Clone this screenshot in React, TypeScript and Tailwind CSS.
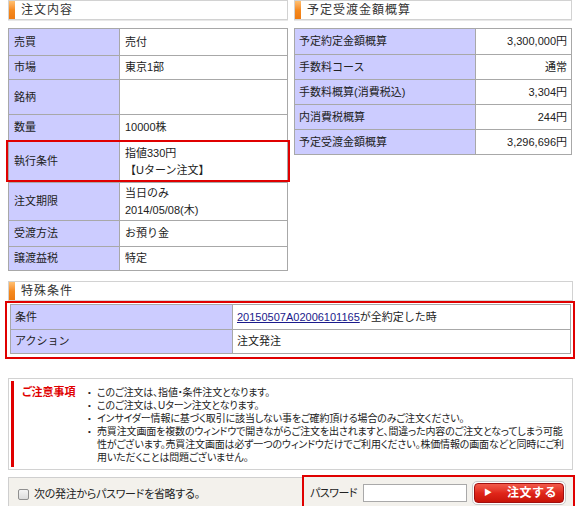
import React from "react";

const FONT = "font-['Liberation_Sans','Noto_Sans_CJK_JP',sans-serif]";

type Row = { label: string; value: React.ReactNode; h: string; mark?: boolean };

const leftRows: Row[] = [
  { label: "売買", value: "売付", h: "h-[26px]" },
  { label: "市場", value: "東京1部", h: "h-[24px]" },
  { label: "銘柄", value: "", h: "h-[35px]" },
  { label: "数量", value: "10000株", h: "h-[26px]" },
  {
    label: "執行条件",
    value: (
      <>
        <div>指値330円</div>
        <div>【Uターン注文】</div>
      </>
    ),
    h: "h-[42px]",
    mark: true,
  },
  {
    label: "注文期限",
    value: (
      <>
        <div>当日のみ</div>
        <div>2014/05/08(木)</div>
      </>
    ),
    h: "h-[38px]",
  },
  { label: "受渡方法", value: "お預り金", h: "h-[26px]" },
  { label: "譲渡益税", value: "特定", h: "h-[24px]" },
];

const rightRows = [
  { label: "予定約定金額概算", value: "3,300,000円" },
  { label: "手数料コース", value: "通常" },
  { label: "手数料概算(消費税込)", value: "3,304円" },
  { label: "内消費税概算", value: "244円" },
  { label: "予定受渡金額概算", value: "3,296,696円" },
];

const notes = [
  "このご注文は、指値・条件注文となります。",
  "このご注文は、Uターン注文となります。",
  "インサイダー情報に基づく取引に該当しない事をご確約頂ける場合のみご注文ください。",
  "売買注文画面を複数のウィンドウで開きながらご注文を出されますと、間違った内容のご注文となってしまう可能性がございます。売買注文画面は必ず一つのウィンドウだけでご利用ください。株価情報の画面などと同時にご利用いただくことは問題ございません。",
];

function SectionHead({ title }: { title: string }) {
  return (
    <div className="flex h-[20px] border border-[#d2d2d2] bg-white shadow-[0_1px_0_#e8e8e8]">
      <div className="w-[6px] bg-linear-to-b from-[#ffc070] via-[#f58a1e] to-[#ee7a10]" />
      <div className="flex items-center pl-[6px] text-[12px] tracking-[1px] text-[#333]">{title}</div>
    </div>
  );
}

export default function App() {
  return (
    <div className={`w-[580px] h-[506px] overflow-hidden bg-white text-[11px] text-[#222] ${FONT}`}>
      <div className="flex pl-[8px] gap-[6px]">
        {/* 注文内容 */}
        <div className="w-[280px]">
          <SectionHead title="注文内容" />
          <div className="mt-[8px] border border-[#a8a8a8] bg-white">
            {leftRows.map((r, i) => (
              <div
                key={r.label}
                className={`relative flex ${r.h} ${i > 0 ? "border-t border-[#a8a8a8]" : ""}`}
              >
                <div className="flex w-[111px] items-center border-r border-[#a8a8a8] bg-[#ccccff] pl-[5px]">
                  {r.label}
                </div>
                <div className="flex flex-1 flex-col justify-center pl-[5px] leading-[17px]">{r.value}</div>
                {r.mark && (
                  <div className="absolute -left-[3px] -right-[3px] -top-[1px] bottom-0 border-2 border-[#e00000]" />
                )}
              </div>
            ))}
          </div>
        </div>

        {/* 予定受渡金額概算 */}
        <div className="w-[278px]">
          <SectionHead title="予定受渡金額概算" />
          <div className="mt-[8px] border border-[#a8a8a8] bg-white">
            {rightRows.map((r, i) => (
              <div key={r.label} className={`flex h-[25px] ${i > 0 ? "border-t border-[#a8a8a8]" : ""}`}>
                <div className="flex w-[181px] items-center border-r border-[#a8a8a8] bg-[#ccccff] pl-[4px]">
                  {r.label}
                </div>
                <div className="flex flex-1 items-center justify-end pr-[4px]">{r.value}</div>
              </div>
            ))}
          </div>
        </div>
      </div>

      {/* 特殊条件 */}
      <div className="mt-[10px] ml-[8px] w-[565px]">
        <SectionHead title="特殊条件" />
      </div>
      <div className="ml-[5px] w-[570px] border-2 border-[#e00000] pt-[1px] pb-[3px] pl-[3px] pr-[2px]">
        <div className="border border-[#a8a8a8] bg-white">
          <div className="flex h-[24px]">
            <div className="flex w-[222px] items-center border-r border-[#a8a8a8] bg-[#ccccff] pl-[4px]">条件</div>
            <div className="flex flex-1 items-center pl-[4px]">
              <a href="#" className="text-[#1a1a8c] underline">20150507A02006101165</a>
              <span>が全約定した時</span>
            </div>
          </div>
          <div className="flex h-[24px] border-t border-[#a8a8a8]">
            <div className="flex w-[222px] items-center border-r border-[#a8a8a8] bg-[#ccccff] pl-[4px]">アクション</div>
            <div className="flex flex-1 items-center pl-[4px]">注文発注</div>
          </div>
        </div>
      </div>

      {/* ご注意事項 */}
      <div className="mt-[19px] ml-[8px] w-[565px] border border-[#d2d2d2] bg-white py-[2px] pl-[2px]">
        <div className="flex border-l-[3px] border-[#e00000] pt-[5px] pb-[3px]">
          <div className="w-[74px] shrink-0 pl-[8px] text-[11px] leading-[13px] font-bold whitespace-nowrap text-[#e00000] [font-feature-settings:'palt']">
            ご注意事項
          </div>
          <ul className="w-[484px] text-[10px] leading-[13px] tracking-[-0.15px] [font-feature-settings:'palt']">
            {notes.map((t) => (
              <li key={t} className="flex">
                <span className="w-[9px] shrink-0 text-[8px]">•</span>
                <span>{t}</span>
              </li>
            ))}
          </ul>
        </div>
      </div>

      {/* 発注 */}
      <div className="mt-[5px] ml-[8px] flex h-[36px] w-[567px] items-stretch">
        <div className="mt-[2px] flex flex-1 items-center gap-[5px] border-t border-l border-[#cfcfcf] bg-[#f3f1ec] pl-[9px] [font-feature-settings:'palt']">
          <span className="inline-block h-[11px] w-[11px] rounded-[2px] border border-[#8f8f8f] bg-linear-to-b from-[#f4f4f4] to-[#dcdcdc]" />
          <span className="text-[11px] tracking-[-0.3px]">次の発注からパスワードを省略する。</span>
        </div>
        <div className="flex w-[273px] items-center border-2 border-[#e00000] bg-[#f3f1ec] pl-[6px]">
          <span className="tracking-[-0.5px] [font-feature-settings:'palt']">パスワード</span>
          <input
            type="password"
            className="ml-[6px] h-[18px] w-[104px] border border-[#a9a9a9] bg-white outline-none"
          />
          <div className="ml-[5px] rounded-[5px] border border-[#c8c8c8] bg-white p-[1px]">
            <button className="flex h-[20px] w-[90px] items-center whitespace-nowrap rounded-[4px] border border-[#a01010] bg-linear-to-b from-[#f25a4a] via-[#e0261a] to-[#c81408] text-white">
              <span className="ml-[9px] text-[8px]">▶</span>
              <span className="ml-[15px] text-[12px] font-bold tracking-[0.5px]">注文する</span>
            </button>
          </div>
        </div>
      </div>
    </div>
  );
}
